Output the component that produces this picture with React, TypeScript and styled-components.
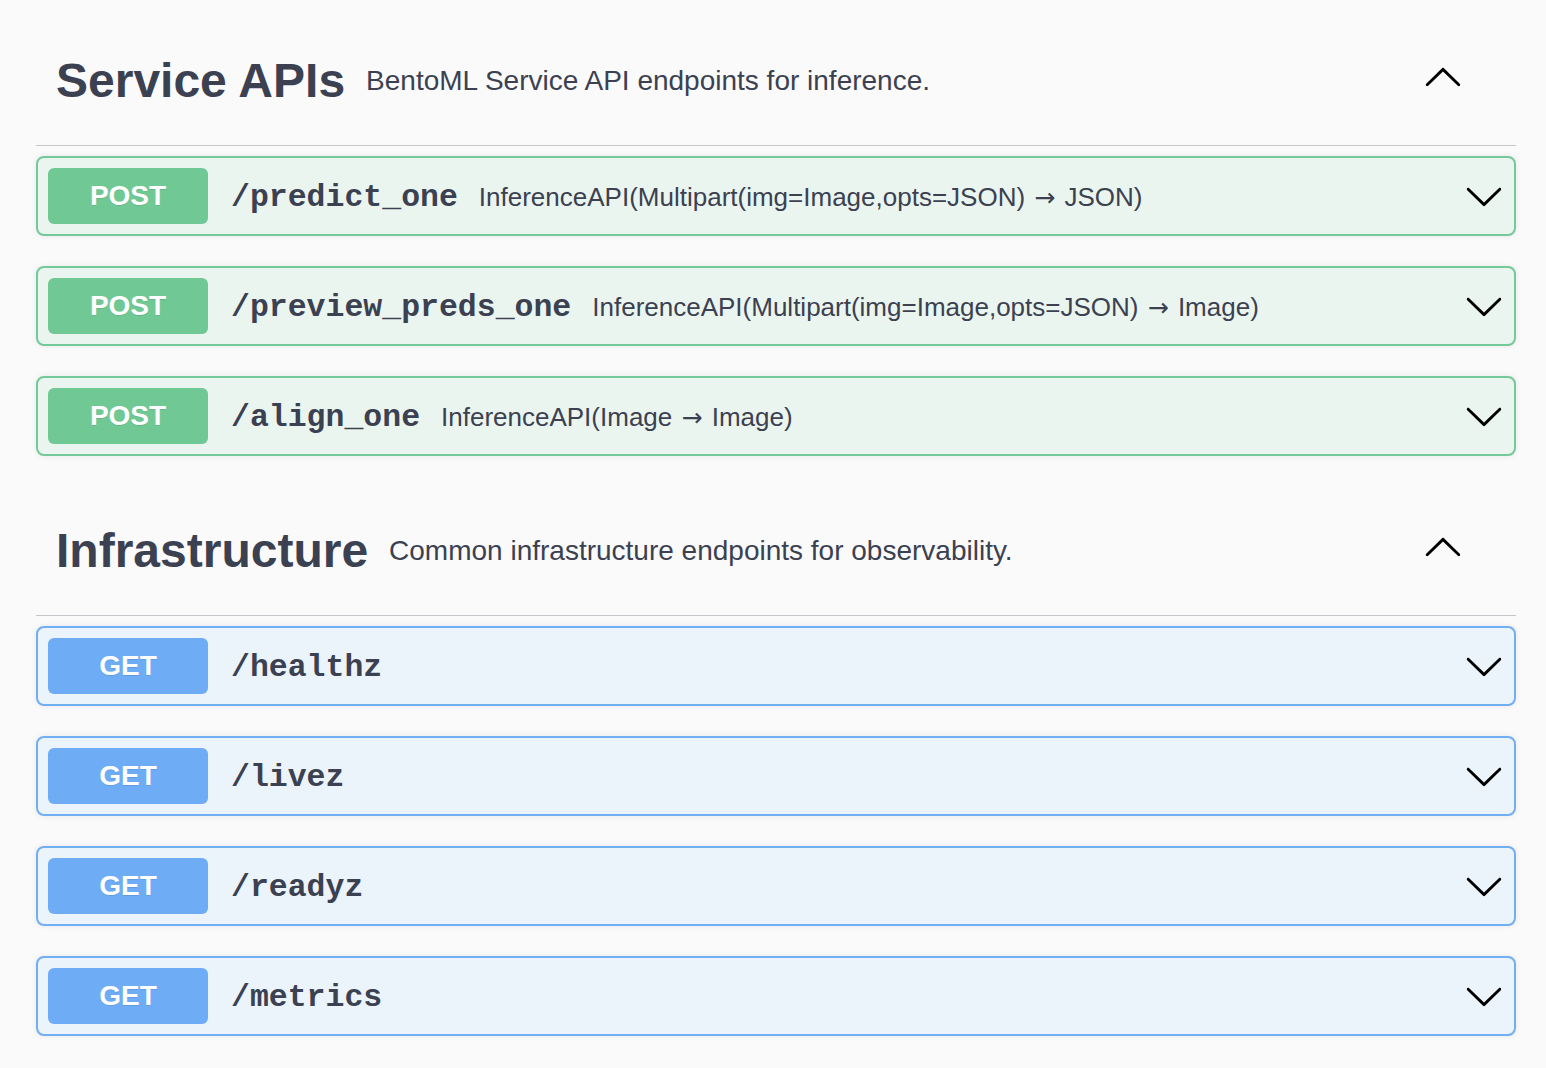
import React from 'react';
import styled, { createGlobalStyle } from 'styled-components';

const GlobalStyle = createGlobalStyle`
  html, body {
    margin: 0;
    padding: 0;
    background: #fafafa;
    font-family: "Liberation Sans", Arial, sans-serif;
    color: #3b4151;
  }
`;

const Page = styled.div`
  padding: 16px 30px 30px 36px;
  width: 1480px;
`;

const Section = styled.section`
  margin-bottom: 0;
`;

const TagHeader = styled.div`
  display: flex;
  align-items: center;
  height: 129px;
  padding: 0 53px 0 20px;
  border-bottom: 1px solid #c4c6cb;
  margin-bottom: 10px;
`;

const TagTitle = styled.h3`
  margin: 0;
  font-size: 48px;
  font-weight: 700;
  color: #3b4151;
`;

const TagDesc = styled.small`
  flex: 1;
  padding: 0 21px;
  font-size: 28px;
  color: #3b4151;
  margin-top: 1px;
`;

const Arrow = styled.svg<{ $up?: boolean }>`
  width: 40px;
  height: 40px;
  flex: none;
  margin-top: ${(p) => (p.$up ? '-5px' : '0')};
  transform: ${(p) => (p.$up ? 'rotate(180deg)' : 'none')};
`;

const palette = {
  POST: { badge: '#70c994', border: '#73c999', bg: '#ebf5ef' },
  GET: { badge: '#6eacf6', border: '#72aef4', bg: '#ebf3fb' },
};

type Method = keyof typeof palette;

const OpBlock = styled.div<{ $method: Method }>`
  display: flex;
  align-items: center;
  height: 76px;
  padding: 0 10px;
  margin-bottom: 30px;
  border: 2px solid ${(p) => palette[p.$method].border};
  border-radius: 8px;
  background: ${(p) => palette[p.$method].bg};
  box-shadow: 0 0 6px rgba(0, 0, 0, 0.08);
`;

const Badge = styled.span<{ $method: Method }>`
  display: flex;
  align-items: center;
  justify-content: center;
  width: 160px;
  height: 56px;
  flex: none;
  border-radius: 6px;
  background: ${(p) => palette[p.$method].badge};
  color: #fff;
  font-size: 28px;
  font-weight: 700;
  text-shadow: 0 1px 0 rgba(0, 0, 0, 0.1);
`;

const Path = styled.span`
  padding: 0 21px 0 23px;
  font-family: "Liberation Mono", "Courier New", monospace;
  font-size: 31.5px;
  font-weight: 700;
  color: #3b4151;
  white-space: nowrap;
  margin-top: 2px;
`;

const Summary = styled.span`
  flex: 1;
  font-size: 26px;
  color: #3b4151;
  white-space: nowrap;
  margin-top: 2px;
`;

const ArrowGlyph = styled.span`
  font-family: "DejaVu Sans", sans-serif;
  font-size: 25px;
  padding: 0 2px;
`;

const ChevronPath = () => (
  <path
    d="M17.418 6.109c.272-.268.709-.268.979 0s.271.701 0 .969l-7.908 7.83c-.27.268-.707.268-.979 0l-7.908-7.83c-.27-.268-.27-.701 0-.969.271-.268.709-.268.979 0L10 13.25l7.418-7.141z"
    fill="#000"
  />
);

const withArrow = (text: string) => {
  const parts = text.split('→');
  return parts.map((part, i) => (
    <React.Fragment key={i}>
      {i > 0 && <ArrowGlyph>→</ArrowGlyph>}
      {part}
    </React.Fragment>
  ));
};

const sections: {
  title: string;
  desc: string;
  ops: { method: Method; path: string; summary?: string }[];
}[] = [
  {
    title: 'Service APIs',
    desc: 'BentoML Service API endpoints for inference.',
    ops: [
      { method: 'POST', path: '/predict_one', summary: 'InferenceAPI(Multipart(img=Image,opts=JSON) → JSON)' },
      { method: 'POST', path: '/preview_preds_one', summary: 'InferenceAPI(Multipart(img=Image,opts=JSON) → Image)' },
      { method: 'POST', path: '/align_one', summary: 'InferenceAPI(Image → Image)' },
    ],
  },
  {
    title: 'Infrastructure',
    desc: 'Common infrastructure endpoints for observability.',
    ops: [
      { method: 'GET', path: '/healthz' },
      { method: 'GET', path: '/livez' },
      { method: 'GET', path: '/readyz' },
      { method: 'GET', path: '/metrics' },
    ],
  },
];

export default function App() {
  return (
    <>
      <GlobalStyle />
      <Page>
        {sections.map((s) => (
          <Section key={s.title}>
            <TagHeader>
              <TagTitle>{s.title}</TagTitle>
              <TagDesc>{s.desc}</TagDesc>
              <Arrow $up viewBox="0 0 20 20">
                <ChevronPath />
              </Arrow>
            </TagHeader>
            {s.ops.map((op) => (
              <OpBlock key={op.path} $method={op.method}>
                <Badge $method={op.method}>{op.method}</Badge>
                <Path>{op.path}</Path>
                <Summary>{op.summary && withArrow(op.summary)}</Summary>
                <Arrow viewBox="0 0 20 20">
                  <ChevronPath />
                </Arrow>
              </OpBlock>
            ))}
          </Section>
        ))}
      </Page>
    </>
  );
}
